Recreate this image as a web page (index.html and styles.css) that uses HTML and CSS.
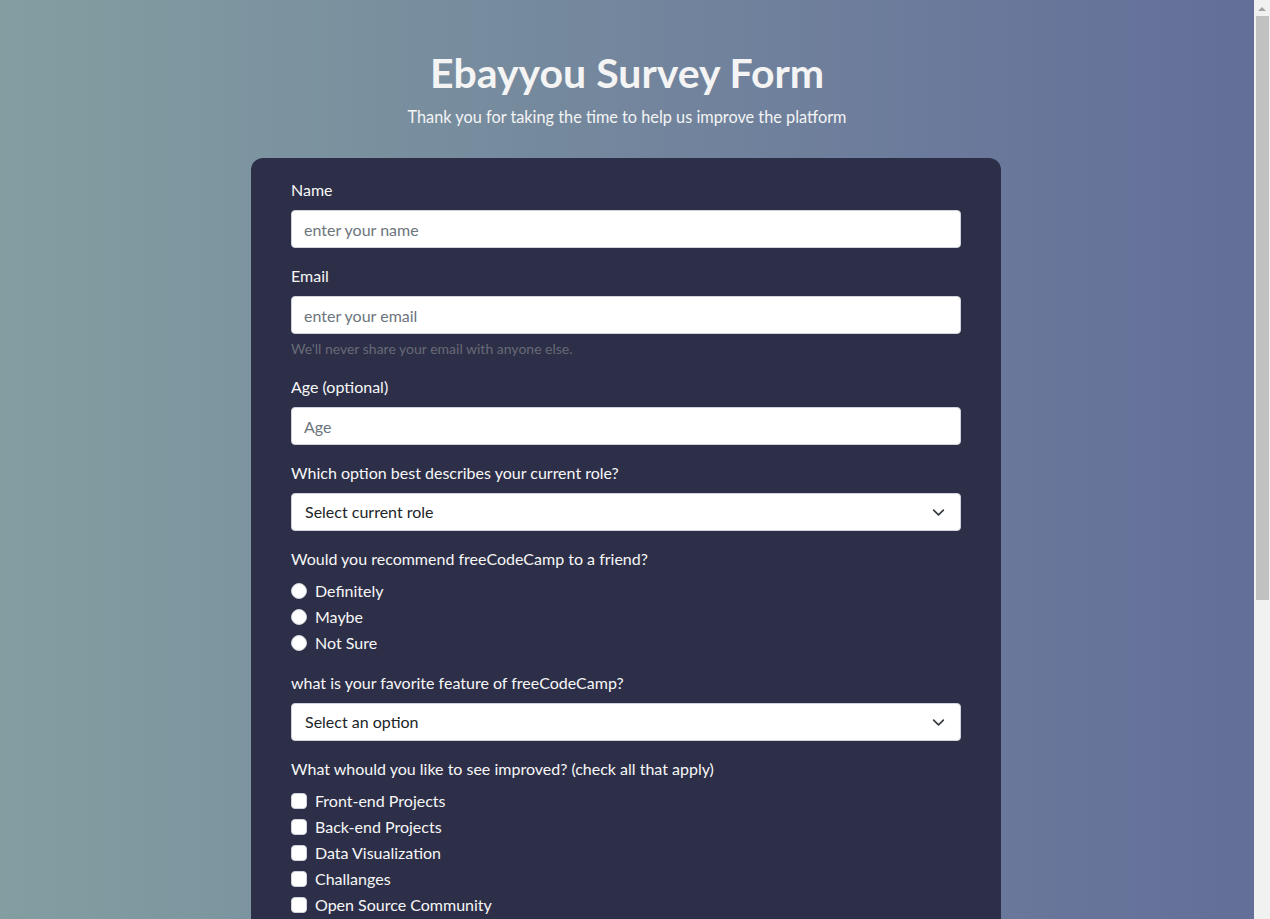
FILE: index.html
```html
<!DOCTYPE html>
<html lang="en">
<head>
<meta charset="utf-8">
<title>Ebayyou Survey Form</title>
<link rel="stylesheet" href="styles.css">
</head>
<body>
<div class="page">
<header class="header">
  <h1 class="title">Ebayyou Survey Form</h1>
  <p class="subtitle">Thank you for taking the time to help us improve the platform</p>
</header>
<main class="card">
  <form class="form">
    <div class="group">
      <label class="label" for="name">Name</label>
      <input class="control" id="name" type="text" placeholder="enter your name">
    </div>
    <div class="group">
      <label class="label" for="email">Email</label>
      <input class="control" id="email" type="email" placeholder="enter your email">
      <div class="help">We'll never share your email with anyone else.</div>
    </div>
    <div class="group">
      <label class="label" for="age">Age (optional)</label>
      <input class="control" id="age" type="number" placeholder="Age">
    </div>
    <div class="group">
      <label class="label" for="role">Which option best describes your current role?</label>
      <div class="select">
        <span>Select current role</span>
        <svg class="chev" width="16" height="16" viewBox="0 0 16 16"><path d="M2 5l6 6 6-6" fill="none" stroke="#343a40" stroke-width="2" stroke-linecap="round" stroke-linejoin="round"/></svg>
      </div>
    </div>
    <div class="group">
      <div class="label">Would you recommend freeCodeCamp to a friend?</div>
      <label class="check"><span class="radio"></span>Definitely</label>
      <label class="check"><span class="radio"></span>Maybe</label>
      <label class="check"><span class="radio"></span>Not Sure</label>
    </div>
    <div class="group">
      <label class="label">what is your favorite feature of freeCodeCamp?</label>
      <div class="select">
        <span>Select an option</span>
        <svg class="chev" width="16" height="16" viewBox="0 0 16 16"><path d="M2 5l6 6 6-6" fill="none" stroke="#343a40" stroke-width="2" stroke-linecap="round" stroke-linejoin="round"/></svg>
      </div>
    </div>
    <div class="group">
      <div class="label">What whould you like to see improved? (check all that apply)</div>
      <label class="check"><span class="box"></span>Front-end Projects</label>
      <label class="check"><span class="box"></span>Back-end Projects</label>
      <label class="check"><span class="box"></span>Data Visualization</label>
      <label class="check"><span class="box"></span>Challanges</label>
      <label class="check"><span class="box"></span>Open Source Community</label>
      <label class="check"><span class="box"></span>Gitter help rooms</label>
      <label class="check"><span class="box"></span>Videos</label>
      <label class="check"><span class="box"></span>City Meetups</label>
      <label class="check"><span class="box"></span>Wiki</label>
      <label class="check"><span class="box"></span>Forum</label>
      <label class="check"><span class="box"></span>Additional Courses</label>
    </div>
    <div class="group">
      <label class="label" for="comments">Any comments or suggestions?</label>
      <textarea class="control area" id="comments" placeholder="Enter your comment here..."></textarea>
    </div>
    <button class="submit" type="button">Submit</button>
  </form>
</main>
</div>
<div class="scrollbar" aria-hidden="true">
  <div class="arrow"></div>
  <div class="thumb"></div>
</div>
</body>
</html>
```
FILE: styles.css
```css
html, body {
  margin: 0;
  padding: 0;
  height: 100%;
  overflow: hidden;
}
body {
  display: flex;
  font-family: Lato, "Open Sans", sans-serif;
  font-size: 16px;
  line-height: 1.5;
  color: #f4f4f4;
}
.page {
  flex: 1;
  height: 100%;
  overflow-y: auto;
  scrollbar-width: none;
  background: linear-gradient(to right, #839ea1, #636e99);
}
.page::-webkit-scrollbar {
  display: none;
}
.scrollbar {
  flex: none;
  width: 16px;
  height: 100%;
  background: #f1f1f1;
  display: flex;
  flex-direction: column;
  align-items: center;
}
.arrow {
  margin-top: 7px;
  width: 0;
  height: 0;
  border-left: 4px solid transparent;
  border-right: 4px solid transparent;
  border-bottom: 4px solid #a3a3a3;
}
.thumb {
  margin-top: 5px;
  width: 13px;
  height: 584px;
  margin-left: 1px;
  background: #c1c1c1;
}
.header {
  text-align: center;
  padding-top: 48px;
}
.title {
  margin: 0 0 7px;
  font-size: 41px;
  font-weight: 700;
  line-height: 1.2;
  color: #f4f4f4;
}
.subtitle {
  margin: 0;
  font-size: 16.3px;
  line-height: 26px;
}
.card {
  width: 750px;
  box-sizing: border-box;
  margin: 28px 0 40px calc(50% - 376px);
  padding: 20px 40px 40px;
  background: #2d2f48;
  border-radius: 12px;
}
.form {
  display: flex;
  flex-direction: column;
}
.group {
  display: flex;
  flex-direction: column;
  margin-bottom: 16px;
}
.label {
  display: block;
  margin-bottom: 8px;
  font-size: 16px;
  line-height: 24px;
  color: #f7f7f7;
}
.control {
  box-sizing: border-box;
  height: 38px;
  padding: 6px 12px;
  border: 1px solid #ced4da;
  border-radius: 4px;
  background: #fff;
  font-family: inherit;
  font-size: 16px;
  line-height: 24px;
  color: #212529;
}
.control::placeholder {
  color: #6c757d;
}
.area {
  height: 86px;
  resize: vertical;
}
.help {
  margin-top: 4px;
  font-size: 14px;
  line-height: 21px;
  color: #676a76;
}
.select {
  box-sizing: border-box;
  height: 38px;
  display: flex;
  align-items: center;
  justify-content: space-between;
  padding: 6px 13px;
  border: 1px solid #ced4da;
  border-radius: 4px;
  background: #fff;
  color: #212529;
}
.chev {
  width: 13px;
  height: 13px;
  margin-right: 2px;
}
.check {
  display: flex;
  align-items: center;
  gap: 8px;
  min-height: 24px;
  margin-bottom: 2px;
  font-size: 16px;
  line-height: 24px;
  color: #f7f7f7;
}
.check:last-child {
  margin-bottom: 0;
}
.radio, .box {
  flex: none;
  width: 16px;
  height: 16px;
  box-sizing: border-box;
  background: #fff;
  border: 1px solid #ced4da;
}
.radio {
  border-radius: 50%;
}
.box {
  border-radius: 4px;
}
.submit {
  height: 38px;
  margin-top: 8px;
  border: none;
  border-radius: 4px;
  background: #3b8f5a;
  color: #fff;
  font-family: inherit;
  font-size: 16px;
}
```
